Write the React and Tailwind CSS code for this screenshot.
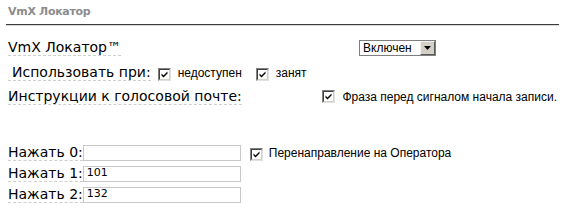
import React from "react";

const labelFont = { fontFamily: '"DejaVu Sans", Verdana, sans-serif' };

const Check = () => (
  <span className="inline-flex h-[13px] w-[13px] shrink-0 items-center justify-center border border-t-[#808080] border-l-[#808080] border-r-[#e0e0e0] border-b-[#e0e0e0] bg-white">
    <span className="flex h-[11px] w-[11px] items-center justify-center border border-t-[#404040] border-l-[#404040] border-r-[#d4d0c8] border-b-[#d4d0c8] bg-white">
      <svg width="9" height="9" viewBox="0 0 9 9">
        <path d="M1.5 3.5 L3.5 5.5 L7.5 1.5 L7.5 3.5 L3.5 7.5 L1.5 5.5 Z" fill="#000" />
      </svg>
    </span>
  </span>
);

const Label = ({ children, className = "" }) => (
  <span
    className={`border-b border-dashed border-[#cfcfcf] text-[14px] leading-[16px] text-black ${className}`}
    style={labelFont}
  >
    {children}
  </span>
);

const Small = ({ children, className = "" }) => (
  <span className={`text-[12px] leading-[14px] text-black font-['Liberation_Sans',Arial,sans-serif] ${className}`}>
    {children}
  </span>
);

const TextInput = ({ value }) => (
  <div className="flex h-[16px] w-[158px] items-center border border-[#c8c8c8] bg-white pl-[3px] text-[11px] text-black font-['DejaVu_Sans',Verdana,sans-serif]">
    {value}
  </div>
);

const App = () => {
  return (
    <div className="h-[210px] w-[565px] bg-white pl-[6px] pr-[6px]">
      {/* header */}
      <div className="flex h-[24px] items-center pl-[2px] pt-[1px]">
        <span className="text-[11px] font-bold tracking-[-0.3px] text-[#8c8c8c] font-['DejaVu_Sans',Verdana,sans-serif]">
          VmX Локатор
        </span>
      </div>
      <div className="h-[1px] w-[553px] bg-[#3c3c3c]" />
      <div className="h-[1px] w-[553px] bg-[#d8d8d8]" />

      <div className="pl-[2px]">
        {/* row 1 */}
        <div className="mt-[12px] flex h-[19px] items-center">
          <Label>VmX Локатор™</Label>
          <div className="ml-[238px] flex h-[16px] w-[77px] items-center border border-[#7f7f7f] bg-white">
            <span className="flex-1 pl-[3px] text-[12px] text-black font-['Liberation_Sans',Arial,sans-serif]">
              Включен
            </span>
            <span className="flex h-[14px] w-[15px] items-center justify-center border border-t-[#f4f4f4] border-l-[#f4f4f4] border-r-[#5a5a5a] border-b-[#5a5a5a] bg-[#d4d0c8]">
              <svg width="7" height="4" viewBox="0 0 7 4">
                <path d="M0 0 H7 L3.5 4 Z" fill="#000" />
              </svg>
            </span>
          </div>
        </div>

        {/* row 2 */}
        <div className="mt-[6px] flex h-[19px] items-center">
          <Label className="pl-[4px]">Использовать при:</Label>
          <span className="ml-[7px]">
            <Check />
          </span>
          <Small className="ml-[7px]">недоступен</Small>
          <span className="ml-[14px]">
            <Check />
          </span>
          <Small className="ml-[7px]">занят</Small>
        </div>

        {/* row 3 */}
        <div className="mt-[5px] flex h-[19px] items-center">
          <Label>Инструкции к голосовой почте:</Label>
          <span className="ml-auto flex items-center pr-[2px]">
            <Check />
            <Small className="ml-[7px]">Фраза перед сигналом начала записи.</Small>
          </span>
        </div>

        {/* press rows */}
        <div className="mt-[36px] flex h-[21px] items-center">
          <Label>Нажать 0:</Label>
          <TextInput value="" />
          <span className="ml-[9px]">
            <Check />
          </span>
          <Small className="ml-[6px]">Перенаправление на Оператора</Small>
        </div>
        <div className="flex h-[21px] items-center">
          <Label>Нажать 1:</Label>
          <TextInput value="101" />
        </div>
        <div className="flex h-[21px] items-center">
          <Label>Нажать 2:</Label>
          <TextInput value="132" />
        </div>
      </div>
    </div>
  );
};

export default App;
